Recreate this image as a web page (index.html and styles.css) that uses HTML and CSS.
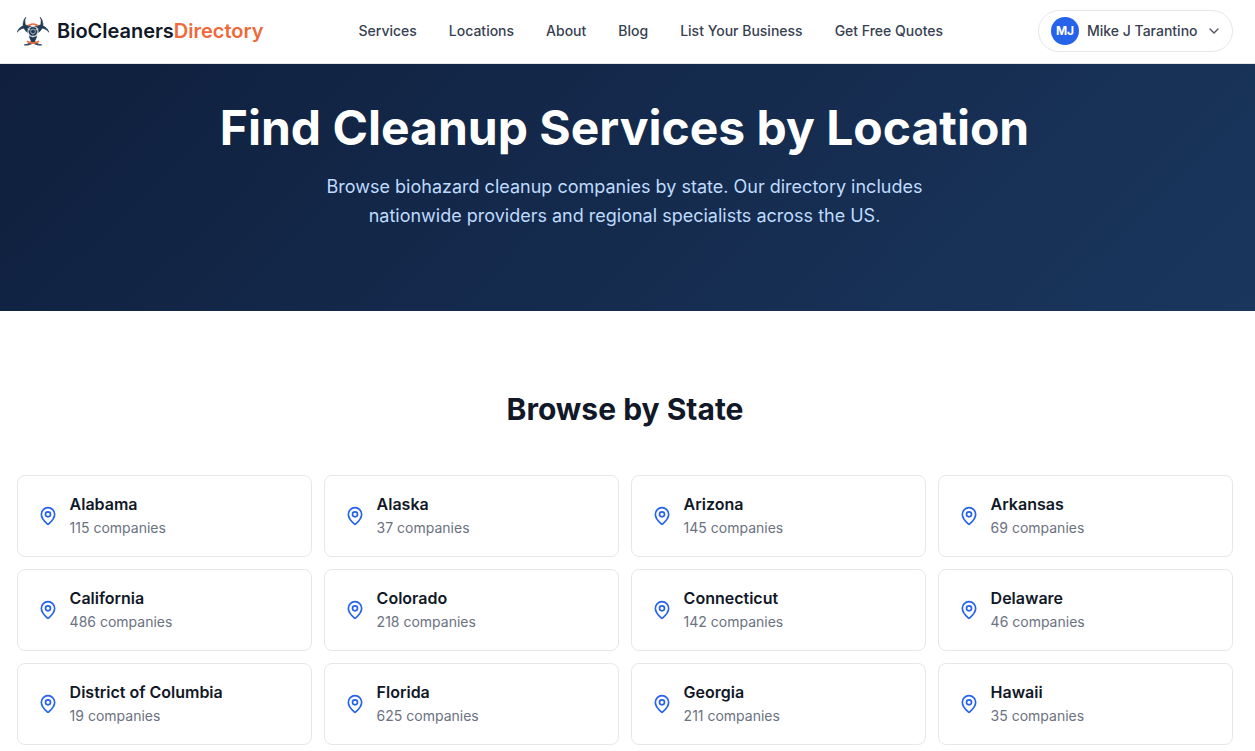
FILE: index.html
```html
<!DOCTYPE html>
<html lang="en">
<head>
<meta charset="utf-8">
<title>Find Cleanup Services by Location</title>
<link rel="stylesheet" href="styles.css">
</head>
<body>
<header class="site-header">
  <a class="logo" href="#">
    <svg class="logo-mark" viewBox="0 0 32 30" aria-hidden="true">
      <defs>
        <path id="lobe" d="M8.800 1.200A10 10 0 1 0 23.200 1.200A8 8 0 0 1 24 7A8 8 0 1 1 8 7A8 8 0 0 1 8.800 1.200z" fill="#1f3a52" stroke="#1f3a52" stroke-width=".6" stroke-linejoin="round"/>
      </defs>
      <use href="#lobe"/>
      <use href="#lobe" transform="rotate(120 16 15.500)"/>
      <use href="#lobe" transform="rotate(240 16 15.500)"/>
      <path d="M11 10A7.800 7.800 0 0 1 21 10" fill="none" stroke="#f0693a" stroke-width="1.800"/>
      <path d="M10 25.200A11 11 0 0 0 22 25.200" fill="none" stroke="#f0693a" stroke-width="1.800"/>
      <circle cx="16" cy="15.500" r="5" fill="none" stroke="#dfe5ea" stroke-width="1.100"/>
      <circle cx="16" cy="15.500" r="2.400" fill="#1f3a52" stroke="#9fb0be" stroke-width="1"/>
    </svg>
    <span class="logo-text">BioCleaners<span class="logo-accent">Directory</span></span>
  </a>
  <nav class="main-nav">
    <a href="#">Services</a>
    <a href="#">Locations</a>
    <a href="#">About</a>
    <a href="#">Blog</a>
    <a href="#">List Your Business</a>
    <a href="#">Get Free Quotes</a>
  </nav>
  <button class="user-menu" type="button">
    <span class="avatar">MJ</span>
    <span class="user-name">Mike J Tarantino</span>
    <svg class="chevron" viewBox="0 0 24 24" aria-hidden="true"><path d="m6 9 6 6 6-6"/></svg>
  </button>
</header>

<section class="hero">
  <h1>Find Cleanup Services by Location</h1>
  <p>Browse biohazard cleanup companies by state. Our directory includes nationwide providers and regional specialists across the US.</p>
</section>

<main class="states">
  <h2>Browse by State</h2>
  <div class="state-grid">
    <a class="state-card" href="#"><svg class="pin" viewBox="0 0 24 24" aria-hidden="true"><path d="M20 10c0 5-5.500 10.200-7.400 11.800a1 1 0 0 1-1.200 0C9.500 20.200 4 15 4 10a8 8 0 0 1 16 0"/><circle cx="12" cy="10" r="3"/></svg><span class="state-info"><strong>Alabama</strong><span>115 companies</span></span></a>
    <a class="state-card" href="#"><svg class="pin" viewBox="0 0 24 24" aria-hidden="true"><path d="M20 10c0 5-5.500 10.200-7.400 11.800a1 1 0 0 1-1.200 0C9.500 20.200 4 15 4 10a8 8 0 0 1 16 0"/><circle cx="12" cy="10" r="3"/></svg><span class="state-info"><strong>Alaska</strong><span>37 companies</span></span></a>
    <a class="state-card" href="#"><svg class="pin" viewBox="0 0 24 24" aria-hidden="true"><path d="M20 10c0 5-5.500 10.200-7.400 11.800a1 1 0 0 1-1.200 0C9.500 20.200 4 15 4 10a8 8 0 0 1 16 0"/><circle cx="12" cy="10" r="3"/></svg><span class="state-info"><strong>Arizona</strong><span>145 companies</span></span></a>
    <a class="state-card" href="#"><svg class="pin" viewBox="0 0 24 24" aria-hidden="true"><path d="M20 10c0 5-5.500 10.200-7.400 11.800a1 1 0 0 1-1.200 0C9.500 20.200 4 15 4 10a8 8 0 0 1 16 0"/><circle cx="12" cy="10" r="3"/></svg><span class="state-info"><strong>Arkansas</strong><span>69 companies</span></span></a>
    <a class="state-card" href="#"><svg class="pin" viewBox="0 0 24 24" aria-hidden="true"><path d="M20 10c0 5-5.500 10.200-7.400 11.800a1 1 0 0 1-1.200 0C9.500 20.200 4 15 4 10a8 8 0 0 1 16 0"/><circle cx="12" cy="10" r="3"/></svg><span class="state-info"><strong>California</strong><span>486 companies</span></span></a>
    <a class="state-card" href="#"><svg class="pin" viewBox="0 0 24 24" aria-hidden="true"><path d="M20 10c0 5-5.500 10.200-7.400 11.800a1 1 0 0 1-1.200 0C9.500 20.200 4 15 4 10a8 8 0 0 1 16 0"/><circle cx="12" cy="10" r="3"/></svg><span class="state-info"><strong>Colorado</strong><span>218 companies</span></span></a>
    <a class="state-card" href="#"><svg class="pin" viewBox="0 0 24 24" aria-hidden="true"><path d="M20 10c0 5-5.500 10.200-7.400 11.800a1 1 0 0 1-1.200 0C9.500 20.200 4 15 4 10a8 8 0 0 1 16 0"/><circle cx="12" cy="10" r="3"/></svg><span class="state-info"><strong>Connecticut</strong><span>142 companies</span></span></a>
    <a class="state-card" href="#"><svg class="pin" viewBox="0 0 24 24" aria-hidden="true"><path d="M20 10c0 5-5.500 10.200-7.400 11.800a1 1 0 0 1-1.200 0C9.500 20.200 4 15 4 10a8 8 0 0 1 16 0"/><circle cx="12" cy="10" r="3"/></svg><span class="state-info"><strong>Delaware</strong><span>46 companies</span></span></a>
    <a class="state-card" href="#"><svg class="pin" viewBox="0 0 24 24" aria-hidden="true"><path d="M20 10c0 5-5.500 10.200-7.400 11.800a1 1 0 0 1-1.200 0C9.500 20.200 4 15 4 10a8 8 0 0 1 16 0"/><circle cx="12" cy="10" r="3"/></svg><span class="state-info"><strong>District of Columbia</strong><span>19 companies</span></span></a>
    <a class="state-card" href="#"><svg class="pin" viewBox="0 0 24 24" aria-hidden="true"><path d="M20 10c0 5-5.500 10.200-7.400 11.800a1 1 0 0 1-1.200 0C9.500 20.200 4 15 4 10a8 8 0 0 1 16 0"/><circle cx="12" cy="10" r="3"/></svg><span class="state-info"><strong>Florida</strong><span>625 companies</span></span></a>
    <a class="state-card" href="#"><svg class="pin" viewBox="0 0 24 24" aria-hidden="true"><path d="M20 10c0 5-5.500 10.200-7.400 11.800a1 1 0 0 1-1.200 0C9.500 20.200 4 15 4 10a8 8 0 0 1 16 0"/><circle cx="12" cy="10" r="3"/></svg><span class="state-info"><strong>Georgia</strong><span>211 companies</span></span></a>
    <a class="state-card" href="#"><svg class="pin" viewBox="0 0 24 24" aria-hidden="true"><path d="M20 10c0 5-5.500 10.200-7.400 11.800a1 1 0 0 1-1.200 0C9.500 20.200 4 15 4 10a8 8 0 0 1 16 0"/><circle cx="12" cy="10" r="3"/></svg><span class="state-info"><strong>Hawaii</strong><span>35 companies</span></span></a>
  </div>
</main>
</body>
</html>
```
FILE: styles.css
```css
* { box-sizing: border-box; }
html, body { height: 751px; overflow: hidden; }
body { margin: 0; background: #fff; font-family: Inter, "Liberation Sans", sans-serif; color: #111827; }
a { text-decoration: none; color: inherit; }

.site-header { height: 64px; padding: 0 22px 1px 17px; display: flex; align-items: center; background: #fff; border-bottom: 1px solid #e5e7eb; }
.logo { display: flex; align-items: center; gap: 8px; width: 341.5px; }
.logo-mark { width: 32px; height: 30px; flex: none; }
.logo-text { font-size: 20px; font-weight: 600; line-height: 28px; color: #111827; letter-spacing: -0.02px; }
.logo-accent { color: #f0693a; }
.main-nav { display: flex; gap: 32px; font-size: 14px; line-height: 20px; font-weight: 500; color: #374151; flex: 1; }
.user-menu { display: flex; align-items: center; gap: 8px; height: 42px; width: 195px; padding: 0 12px; border: 1px solid #e5e7eb; border-radius: 21px; background: #fff; font: inherit; font-size: 14px; line-height: 20px; font-weight: 500; color: #374151; }
.avatar { width: 28px; height: 28px; flex: none; border-radius: 50%; background: #2563eb; color: #fff; font-size: 12px; font-weight: 700; display: flex; align-items: center; justify-content: center; }
.user-name { white-space: nowrap; }
.chevron { width: 16px; height: 16px; flex: none; fill: none; stroke: #4b5563; stroke-width: 2; stroke-linecap: round; stroke-linejoin: round; }

.hero { height: 247px; padding: 34px 17px 0 17px; background: linear-gradient(135deg, #0f1f3d 0%, #1a365d 100%); text-align: center; color: #fff; }
.hero h1 { margin: 0 6px 0 0; font-size: 48px; line-height: 60px; font-weight: 700; }
.hero p { margin: 14px auto 0; width: 672px; transform: translateX(-3px); font-size: 18px; line-height: 29px; color: #bfdbfe; }

.states { padding: 80px 22px 0 17px; }
.states h2 { margin: 0 0 48px; text-align: center; font-size: 30px; line-height: 36px; font-weight: 700; color: #111827; }
.state-grid { display: grid; grid-template-columns: repeat(4, 1fr); gap: 12px; }
.state-card { height: 82px; display: flex; align-items: center; gap: 11.600px; padding: 0 20px; border: 1px solid #e5e7eb; border-radius: 8px; background: #fff; }
.pin { width: 20px; height: 20px; flex: none; fill: none; stroke: #2563eb; stroke-width: 2; stroke-linecap: round; stroke-linejoin: round; }
.state-info { display: flex; flex-direction: column; padding-bottom: 2px; }
.state-info strong { font-size: 16px; line-height: 24px; font-weight: 600; color: #111827; }
.state-info span { font-size: 14px; line-height: 20px; color: #6b7280; margin-top: 2px; }
```
